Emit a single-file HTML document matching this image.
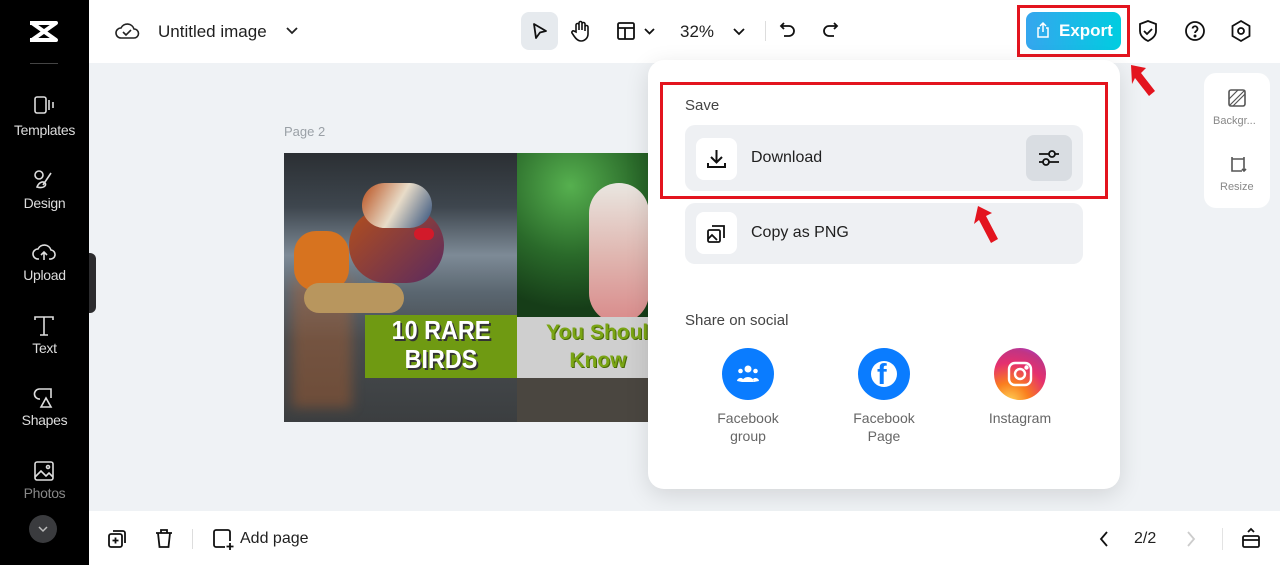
<!DOCTYPE html>
<html><head><meta charset="utf-8"><style>
*{margin:0;padding:0;box-sizing:border-box}
body{width:1280px;height:565px;overflow:hidden;font-family:"Liberation Sans",sans-serif;background:#eff2f5;position:relative}
.abs{position:absolute}
.side{left:0;top:0;width:89px;height:565px;background:#000}
.si{position:absolute;left:0;width:89px;text-align:center;color:#ddd;font-size:14px;letter-spacing:-0.3px}
.top{left:89px;top:0;width:1191px;height:63px;background:#fff}
.bot{left:89px;top:511px;width:1191px;height:54px;background:#fff}
svg{position:absolute;overflow:visible}
.t{position:absolute;white-space:nowrap}
</style></head><body>
<div class="abs side"></div>
<svg style="left:28px;top:20px" width="32" height="24" viewBox="0 0 32 24"><path d="M2 3h26L4 20h24M2 20h26L4 3" stroke="#fff" stroke-width="4" fill="none" stroke-linejoin="round"/></svg>
<div class="abs" style="left:30px;top:63px;width:28px;height:1px;background:#444"></div>
<svg style="left:34px;top:96px" width="22" height="20" viewBox="0 0 22 20" fill="none" stroke="#ddd" stroke-width="1.6"><rect x="1" y="1" width="11" height="16" rx="2"/><path d="M15 4v10M19 6v6"/></svg>
<div class="si" style="top:122px">Templates</div>
<svg style="left:33px;top:169px" width="22" height="22" viewBox="0 0 22 22" fill="none" stroke="#ddd" stroke-width="1.6"><circle cx="6" cy="6" r="4"/><path d="M10 16l8-12M4 18c2-5 6-6 8-4s-1 6-8 4z"/></svg>
<div class="si" style="top:195px">Design</div>
<svg style="left:32px;top:242px" width="24" height="20" viewBox="0 0 24 20" fill="none" stroke="#ddd" stroke-width="1.6"><path d="M7 17H6a5 5 0 010-10 7 7 0 0113 1 4 4 0 01-1 9h-1M12 18V10M9 13l3-3 3 3"/></svg>
<div class="si" style="top:267px">Upload</div>
<svg style="left:33px;top:315px" width="22" height="22" viewBox="0 0 22 22" fill="none" stroke="#ddd" stroke-width="1.6"><path d="M2 5V2h18v3M11 2v18M7 20h8"/></svg>
<div class="si" style="top:340px">Text</div>
<svg style="left:32px;top:387px" width="24" height="22" viewBox="0 0 24 22" fill="none" stroke="#ddd" stroke-width="1.6"><path d="M8 12a5 5 0 01-1-10h12v9M9 20l5-9 5 9z"/></svg>
<div class="si" style="top:412px">Shapes</div>
<svg style="left:34px;top:461px" width="20" height="20" viewBox="0 0 20 20" fill="none" stroke="#ddd" stroke-width="1.6"><rect x="1" y="1" width="18" height="18" rx="2"/><path d="M1 16l6-6 5 5 3-3 4 4"/><circle cx="14" cy="6" r="1.5"/></svg>
<div class="si" style="top:485px;color:#888">Photos</div>
<div class="abs" style="left:29px;top:515px;width:28px;height:28px;border-radius:50%;background:#3a3b3e"></div>
<svg style="left:38px;top:526px" width="10" height="6" viewBox="0 0 10 6"><path d="M1 1l4 4 4-4" stroke="#bbb" stroke-width="1.5" fill="none"/></svg>
<div class="abs" style="left:89px;top:253px;width:7px;height:60px;background:#2c2c2e;border-radius:0 6px 6px 0"></div>

<div class="abs top"></div>
<svg style="left:115px;top:21px" width="24" height="20" viewBox="0 0 24 20" fill="none" stroke="#222" stroke-width="1.6"><path d="M6 17a5 5 0 010-10 7 7 0 0113 1 4.5 4.5 0 010 9zM8 11l3 3 5-5"/></svg>
<div class="t" style="left:158px;top:22px;font-size:17px;color:#1f1f1f">Untitled image</div>
<svg style="left:286px;top:27px" width="12" height="7" viewBox="0 0 12 7"><path d="M1 1l5 5 5-5" stroke="#222" stroke-width="1.8" fill="none"/></svg>
<div class="abs" style="left:521px;top:12px;width:37px;height:38px;border-radius:8px;background:#e6eaee"></div>
<svg style="left:532px;top:22px" width="16" height="18" viewBox="0 0 16 18"><path d="M2 2l12 7-6 1.5L4 16z" stroke="#111" stroke-width="1.8" fill="none" stroke-linejoin="round"/></svg>
<svg style="left:571px;top:20px" width="20" height="22" viewBox="0 0 20 22" fill="none" stroke="#111" stroke-width="1.6"><path d="M5 12V5a1.5 1.5 0 013 0v5V3a1.5 1.5 0 013 0v7V4a1.5 1.5 0 013 0v7V7a1.5 1.5 0 013 0v7a7 7 0 01-7 7c-3 0-5-2-7-5l-2-3a1.5 1.5 0 012-2z"/></svg>
<svg style="left:617px;top:22px" width="18" height="18" viewBox="0 0 18 18" fill="none" stroke="#111" stroke-width="1.8"><rect x="1" y="1" width="16" height="16" rx="1.5"/><path d="M1 6h16M8 6v11"/></svg>
<svg style="left:644px;top:28px" width="11" height="7" viewBox="0 0 11 7"><path d="M1 1l4.5 4.5L10 1" stroke="#111" stroke-width="1.8" fill="none"/></svg>
<div class="t" style="left:680px;top:22px;font-size:17px;color:#1f1f1f">32%</div>
<svg style="left:733px;top:28px" width="12" height="7" viewBox="0 0 12 7"><path d="M1 1l5 5 5-5" stroke="#111" stroke-width="1.8" fill="none"/></svg>
<div class="abs" style="left:765px;top:21px;width:1px;height:20px;background:#ddd"></div>
<svg style="left:779px;top:21px" width="18" height="20" viewBox="0 0 18 20" fill="none" stroke="#111" stroke-width="1.8"><path d="M5 2L2 5l3 3M2 5h8a5 5 0 010 10H5"/></svg>
<svg style="left:821px;top:21px" width="18" height="20" viewBox="0 0 18 20" fill="none" stroke="#111" stroke-width="1.8"><path d="M13 2l3 3-3 3M16 5H8a5 5 0 000 10h5"/></svg>

<div class="abs" style="left:1017px;top:5px;width:113px;height:52px;border:3px solid #e3141e"></div>
<div class="abs" style="left:1026px;top:12px;width:95px;height:38px;border-radius:8px;background:linear-gradient(90deg,#35a6ee,#00cde0)"></div>
<svg style="left:1036px;top:22px" width="14" height="16" viewBox="0 0 14 16" fill="none" stroke="#fff" stroke-width="1.5"><path d="M4 6H2v9h10V6h-2M7 10V1M4 4l3-3 3 3"/></svg>
<div class="t" style="left:1059px;top:21px;font-size:17px;color:#fff;font-weight:bold">Export</div>
<svg style="left:1138px;top:20px" width="20" height="22" viewBox="0 0 20 22" fill="none" stroke="#111" stroke-width="1.8"><path d="M10 1l8 3v7c0 5-4 8-8 10-4-2-8-5-8-10V4zM6 11l3 3 5-5"/></svg>
<svg style="left:1185px;top:21px" width="20" height="20" viewBox="0 0 20 20" fill="none" stroke="#111" stroke-width="1.8"><circle cx="10" cy="10" r="9"/><path d="M7.5 7.5a2.5 2.5 0 115 .5c0 2-2.5 2-2.5 4"/><circle cx="10" cy="15" r=".6" fill="#111"/></svg>
<svg style="left:1231px;top:20px" width="20" height="22" viewBox="0 0 20 22" fill="none" stroke="#111" stroke-width="1.8"><path d="M10 1l8.5 5v10L10 21 1.5 16V6z"/><circle cx="10" cy="11" r="3"/></svg>

<!-- canvas -->
<div class="t" style="left:284px;top:124px;font-size:13px;color:#9aa0a6">Page 2</div>
<div class="abs" style="left:284px;top:153px;width:366px;height:269px;overflow:hidden;background:#3d4246">
  <div class="abs" style="left:0;top:0;width:233px;height:269px;background:linear-gradient(180deg,#2b2f33 0%,#3e464e 20%,#7d8a96 38%,#5a6670 52%,#474b4e 70%,#3b3e40 100%)"></div>
  <div class="abs" style="left:8px;top:125px;width:60px;height:130px;background:rgba(200,100,40,.35);filter:blur(6px)"></div>
  <div class="abs" style="left:10px;top:78px;width:55px;height:60px;border-radius:22px;background:#d7731f"></div>
  <div class="abs" style="left:65px;top:55px;width:95px;height:75px;border-radius:45px;background:linear-gradient(135deg,#b34f1c,#5a2a60)"></div>
  <div class="abs" style="left:78px;top:30px;width:70px;height:45px;border-radius:30px;background:linear-gradient(120deg,#b84e1c,#e8dcc8 50%,#2d4d7a)"></div>
  <div class="abs" style="left:130px;top:75px;width:20px;height:12px;border-radius:6px;background:#d21a2a"></div>
  <div class="abs" style="left:20px;top:130px;width:100px;height:30px;border-radius:15px;background:#b8965e"></div>
  <div class="abs" style="left:233px;top:0;width:133px;height:165px;background:radial-gradient(circle at 40% 20%,#56b04f,#2a6a2a 45%,#163d18 80%)"></div>
  <div class="abs" style="left:305px;top:30px;width:60px;height:140px;border-radius:30px;background:linear-gradient(180deg,#e9e6e0,#e0b8b2 50%,#d98a8a)"></div>
  <div class="abs" style="left:233px;top:225px;width:133px;height:44px;background:#4a4640"></div>
  <div class="abs" style="left:81px;top:162px;width:152px;height:63px;background:#6f9a12"></div>
  <div class="t" style="left:81px;top:163px;width:152px;text-align:center;font-size:26px;line-height:29px;color:#fff;font-weight:bold;text-shadow:2px 2px 0 #333;transform:scaleX(0.9)">10 RARE<br>BIRDS</div>
  <div class="abs" style="left:233px;top:164px;width:133px;height:61px;background:#cfcfcf"></div>
  <div class="t" style="left:262px;top:166px;font-size:21px;line-height:28px;color:#7aa514;font-weight:bold;text-shadow:1px 1px 0 #4a6a08">You Should<br>&nbsp;&nbsp;&nbsp;&nbsp;Know</div>
</div>

<div class="abs" style="left:1204px;top:73px;width:66px;height:135px;background:#fff;border-radius:12px"></div>
<svg style="left:1228px;top:89px" width="18" height="18" viewBox="0 0 18 18" fill="none" stroke="#555" stroke-width="1.6"><rect x="1" y="1" width="16" height="16" rx="2"/><path d="M1 10L10 1M5 17L17 5M1 17L17 1" stroke-width="1.2"/></svg>
<div class="t" style="left:1213px;top:115px;font-size:11px;color:#888">Backgr...</div>
<svg style="left:1229px;top:155px" width="18" height="18" viewBox="0 0 18 18" fill="none" stroke="#555" stroke-width="1.6"><path d="M3 2v14h10M3 4h12M15 2v14M13 14l2 2 2-2"/></svg>
<div class="t" style="left:1220px;top:181px;font-size:11px;color:#888">Resize</div>

<!-- popup -->
<div class="abs" style="left:648px;top:60px;width:472px;height:429px;background:#fff;border-radius:16px;box-shadow:0 6px 24px rgba(0,0,0,.12)"></div>
<div class="t" style="left:685px;top:97px;font-size:15px;color:#444">Save</div>
<div class="abs" style="left:685px;top:125px;width:398px;height:66px;background:#eef0f3;border-radius:10px"></div>
<div class="abs" style="left:696px;top:138px;width:41px;height:42px;background:#fff;border-radius:8px"></div>
<svg style="left:706px;top:148px" width="21" height="21" viewBox="0 0 21 21" fill="none" stroke="#111" stroke-width="2"><path d="M10.5 2v12M5 9l5.5 5.5L16 9M2 15v4h17v-4"/></svg>
<div class="t" style="left:751px;top:149px;font-size:16px;color:#1f1f1f">Download</div>
<div class="abs" style="left:1026px;top:135px;width:46px;height:46px;background:#d9dde2;border-radius:8px"></div>
<svg style="left:1038px;top:148px" width="22" height="20" viewBox="0 0 22 20" fill="none" stroke="#111" stroke-width="1.8"><path d="M1 6h20M1 14h20"/><circle cx="14" cy="6" r="3" fill="#d9dde2"/><circle cx="8" cy="14" r="3" fill="#d9dde2"/></svg>
<div class="abs" style="left:685px;top:203px;width:398px;height:61px;background:#eef0f3;border-radius:10px"></div>
<div class="abs" style="left:696px;top:212px;width:41px;height:42px;background:#fff;border-radius:8px"></div>
<svg style="left:706px;top:224px" width="20" height="20" viewBox="0 0 20 20" fill="none" stroke="#111" stroke-width="1.8"><rect x="2" y="6" width="12" height="12" rx="1.5"/><path d="M6 2h12v12M2 15l4-4 5 5"/></svg>
<div class="t" style="left:751px;top:224px;font-size:16px;color:#1f1f1f">Copy as PNG</div>
<div class="abs" style="left:660px;top:82px;width:448px;height:117px;border:3px solid #e3141e"></div>

<div class="t" style="left:685px;top:312px;font-size:15px;color:#444">Share on social</div>
<div class="abs" style="left:722px;top:348px;width:52px;height:52px;border-radius:50%;background:#0a7cff"></div>
<svg style="left:736px;top:364px" width="24" height="20" viewBox="0 0 24 20" fill="#fff"><circle cx="12" cy="5" r="3.5"/><circle cx="4.5" cy="7" r="2.3"/><circle cx="19.5" cy="7" r="2.3"/><path d="M6 18a6 5 0 0112 0zM1 17a3.5 3.5 0 016-2l-1 3zM23 17a3.5 3.5 0 00-6-2l1 3z"/></svg>
<div class="abs" style="left:858px;top:348px;width:52px;height:52px;border-radius:50%;background:#0a7cff"></div>
<div class="abs" style="left:871px;top:361px;width:26px;height:26px;border-radius:50%;background:#fff"></div>
<div class="t" style="left:877px;top:358px;font-size:29px;font-weight:bold;color:#0a7cff;line-height:34px">f</div>
<div class="abs" style="left:994px;top:348px;width:52px;height:52px;border-radius:50%;background:radial-gradient(circle at 30% 105%,#fdd65a 0%,#fa7e1e 30%,#e5306e 60%,#c13584 80%,#9b3ff0 100%)"></div>
<svg style="left:1007px;top:361px" width="26" height="26" viewBox="0 0 26 26" fill="none" stroke="#fff" stroke-width="2.4"><rect x="2" y="2" width="22" height="22" rx="6"/><circle cx="13" cy="13" r="5"/><circle cx="19.5" cy="6.5" r="1" fill="#fff"/></svg>
<div class="t" style="left:698px;top:409px;width:100px;text-align:center;font-size:14px;color:#666;line-height:18px">Facebook<br>group</div>
<div class="t" style="left:834px;top:409px;width:100px;text-align:center;font-size:14px;color:#666;line-height:18px">Facebook<br>Page</div>
<div class="t" style="left:970px;top:409px;width:100px;text-align:center;font-size:14px;color:#666;line-height:18px">Instagram</div>

<!-- red arrows -->
<svg style="left:1128px;top:62px" width="34" height="40" viewBox="0 0 34 40"><path d="M3 3l15 3-5 5 14 18-6 5-14-18-3 6z" fill="#e3141e"/></svg>
<svg style="left:973px;top:204px" width="34" height="42" viewBox="0 0 34 42"><path d="M5 2l14 7-6 3 12 23-7 4-12-23-5 4z" fill="#e3141e"/></svg>

<!-- bottom bar -->
<div class="abs bot"></div>
<svg style="left:107px;top:529px" width="20" height="20" viewBox="0 0 20 20" fill="none" stroke="#111" stroke-width="1.8"><rect x="2" y="5" width="13" height="13" rx="2"/><path d="M6 2h10a2 2 0 012 2v10M8.5 8.5v6M5.5 11.5h6"/></svg>
<svg style="left:155px;top:529px" width="18" height="20" viewBox="0 0 18 20" fill="none" stroke="#111" stroke-width="1.8"><path d="M1 4h16M6 4V1h6v3M3 4l1.5 14h9L15 4"/></svg>
<div class="abs" style="left:192px;top:529px;width:1px;height:20px;background:#ddd"></div>
<svg style="left:213px;top:529px" width="22" height="22" viewBox="0 0 22 22" fill="none" stroke="#111" stroke-width="1.8"><path d="M12 18H3a2 2 0 01-2-2V3a2 2 0 012-2h12a2 2 0 012 2v9M17 14v7M13.5 17.5h7"/></svg>
<div class="t" style="left:240px;top:530px;font-size:16px;color:#1f1f1f">Add page</div>
<svg style="left:1099px;top:531px" width="10" height="16" viewBox="0 0 10 16"><path d="M8 1L2 8l6 7" stroke="#111" stroke-width="1.8" fill="none"/></svg>
<div class="t" style="left:1134px;top:530px;font-size:16px;color:#1f1f1f">2/2</div>
<svg style="left:1186px;top:531px" width="10" height="16" viewBox="0 0 10 16"><path d="M2 1l6 7-6 7" stroke="#ccc" stroke-width="1.8" fill="none"/></svg>
<div class="abs" style="left:1222px;top:528px;width:1px;height:22px;background:#e3e3e3"></div>
<svg style="left:1242px;top:527px" width="18" height="22" viewBox="0 0 18 22" fill="none" stroke="#111" stroke-width="1.8"><rect x="1" y="9" width="16" height="11" rx="1.5"/><path d="M1 13h16M6 5l3-3 3 3"/></svg>
</body></html>
